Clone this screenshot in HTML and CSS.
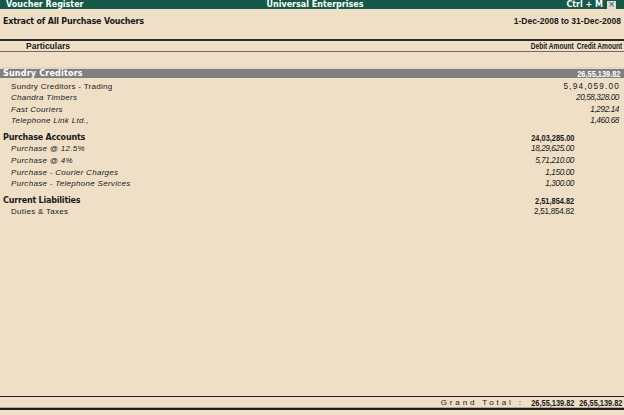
FILE: index.html
```html
<!DOCTYPE html>
<html>
<head>
<meta charset="utf-8">
<link rel="stylesheet" href="styles.css">
</head>
<body>
<div class="screen">
  <div class="titlebar">
    <span class="tb-left">Voucher Register</span>
    <span class="tb-center">Universal Enterprises</span>
    <span class="tb-right">Ctrl + M <span class="close">×</span></span>
  </div>
  <div class="report-head">
    <span class="rh-title">Extract of All Purchase Vouchers</span>
    <span class="rh-period">1-Dec-2008 to 31-Dec-2008</span>
  </div>
  <div class="colhead">
    <span class="ch-part">Particulars</span>
    <span class="cell"><span class="nb">Debit Amount</span></span>
    <span class="cell"><span class="nb">Credit Amount</span></span>
  </div>
  <div class="body">
    <div class="group first">
      <div class="row grp selected"><span class="name">Sundry Creditors</span><span class="cell"></span><span class="cell cr"><span class="nb">26,55,139.82</span></span></div>
      <div class="row sub"><span class="name">Sundry Creditors - Trading</span><span class="cell"></span><span class="cell cr wide">5,94,059.00</span></div>
      <div class="row sub it"><span class="name">Chandra Timbers</span><span class="cell"></span><span class="cell cr">20,58,328.00</span></div>
      <div class="row sub it"><span class="name">Fast Couriers</span><span class="cell"></span><span class="cell cr">1,292.14</span></div>
      <div class="row sub it"><span class="name">Telephone Link Ltd.,</span><span class="cell"></span><span class="cell cr">1,460.68</span></div>
    </div>
    <div class="group">
      <div class="row grp"><span class="name">Purchase Accounts</span><span class="cell"><span class="nb">24,03,285.00</span></span><span class="cell cr"></span></div>
      <div class="row sub it"><span class="name">Purchase @ 12.5%</span><span class="cell">18,29,625.00</span><span class="cell cr"></span></div>
      <div class="row sub it"><span class="name">Purchase @ 4%</span><span class="cell">5,71,210.00</span><span class="cell cr"></span></div>
      <div class="row sub it"><span class="name">Purchase - Courier Charges</span><span class="cell">1,150.00</span><span class="cell cr"></span></div>
      <div class="row sub it"><span class="name">Purchase - Telephone Services</span><span class="cell">1,300.00</span><span class="cell cr"></span></div>
    </div>
    <div class="group">
      <div class="row grp"><span class="name">Current Liabilities</span><span class="cell"><span class="nb">2,51,854.82</span></span><span class="cell cr"></span></div>
      <div class="row sub"><span class="name">Duties &amp; Taxes</span><span class="cell">2,51,854.82</span><span class="cell cr"></span></div>
    </div>
  </div>
  <div class="footer">
    <span class="gt-label">Grand Total :</span>
    <span class="cell"><span class="nb">26,55,139.82</span></span>
    <span class="cell"><span class="nb">26,55,139.82</span></span>
  </div>
  <div class="bottom"></div>
</div>
</body>
</html>
```

FILE: styles.css
```css
* { box-sizing: border-box; }
html, body { margin: 0; padding: 0; }
body {
  background: #eedfc6;
  font-family: "Liberation Sans", Arial, sans-serif;
  color: #1a1a1a;
}
.screen {
  width: 624px;
  height: 415px;
  display: flex;
  flex-direction: column;
  background: #eedfc6;
}
.titlebar {
  height: 9px;
  flex: none;
  background: #175848;
  color: #ffffff;
  font-family: "DejaVu Sans", sans-serif;
  font-weight: bold;
  font-size: 8px;
  line-height: 9px;
  display: grid;
  grid-template-columns: 1fr auto 1fr;
  padding: 0 0 0 6px;
}
.tb-center { text-align: center; }
.tb-right { display: flex; justify-content: flex-end; align-items: center; gap: 4px; padding-right: 8px; }
.close {
  width: 9px; height: 8px;
  background: #dcdcdc;
  color: #444;
  font-size: 8px;
  line-height: 8px;
  text-align: center;
  font-weight: normal;
}
.report-head {
  height: 30px;
  flex: none;
  display: flex;
  justify-content: space-between;
  padding: 7px 3px 0 3px;
  font-weight: bold;
  line-height: 11px;
}
.rh-title { font-family: "DejaVu Sans", sans-serif; font-size: 8px; letter-spacing: -0.2px; }
.rh-period { font-family: "Liberation Sans", Arial, sans-serif; font-size: 8.5px; }
.colhead {
  flex: none;
  border-top: 2px solid #2a2a2a;
  border-bottom: 1px solid #6e6a62;
  height: 13px;
  display: grid;
  grid-template-columns: 1fr 60px 48px;
  padding: 0 2px 0 26px;
  font-weight: bold;
  font-size: 8.5px;
  line-height: 10px;
}
.cell { display: flex; justify-content: flex-end; white-space: nowrap; }
.nb {
  display: inline-block;
  font-family: "Liberation Sans", Arial, sans-serif;
  font-weight: bold;
  font-size: 9.5px;
  transform: scaleX(0.78);
  transform-origin: right center;
  letter-spacing: 0;
}
.colhead .nb { font-size: 9px; transform: scaleX(0.73); }
.body { flex: 1; padding-top: 17px; }
.group { margin-top: 5px; }
.group.first { margin-top: 0; }
.row {
  display: grid;
  grid-template-columns: 1fr 60px 48px;
  padding: 0 2px 0 11px;
  height: 11.6px;
  font-size: 8px;
  line-height: 11.6px;
  letter-spacing: 0.3px;
}
.row .cell { font-size: 8.2px; letter-spacing: -0.3px; }
.row .cell.cr { padding-right: 3px; }
.row .cell.wide { font-size: 8.2px; letter-spacing: 1.2px; padding-right: 2px; }
.row.it { font-style: italic; }
.row.it .cell { letter-spacing: -0.4px; }
.row.grp {
  padding-left: 3px;
  font-family: "DejaVu Sans", sans-serif;
  font-weight: bold;
  font-size: 8px;
  letter-spacing: -0.2px;
}
.row.selected {
  background: #808080;
  color: #ffffff;
  height: 9px;
  line-height: 9px;
  margin-bottom: 2.5px;
  letter-spacing: 0.2px;
  box-shadow: 0 -2px 0 #e4d6be;
}
.row.selected .cell.cr { padding-right: 2px; }
.footer {
  flex: none;
  border-top: 1px solid #222;
  height: 12px;
  display: grid;
  grid-template-columns: 1fr auto 50px 48px;
  padding: 0 2px 0 0;
  font-size: 8px;
  line-height: 11px;
  box-shadow: inset 0 -1px 0 #b3a995;
}
.gt-label { grid-column: 2; letter-spacing: 2.9px; padding-right: 0; color: #222; }
.bottom {
  flex: none;
  height: 7px;
  border-top: 2px solid #1e1e1e;
}
```
